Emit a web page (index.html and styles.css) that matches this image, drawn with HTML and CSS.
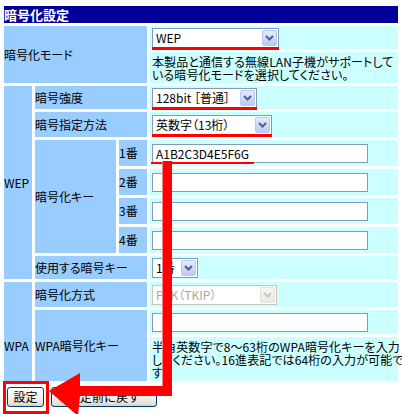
FILE: index.html
```html
<!DOCTYPE html>
<html lang="ja">
<head>
<meta charset="utf-8">
<title>暗号化設定</title>
<link rel="stylesheet" href="styles.css">
</head>
<body>
<div class="page">
  <table class="cfg">
    <colgroup><col class="c1"><col class="c2"><col class="c3"><col class="c4"></colgroup>
    <tr class="h17"><th class="title" colspan="4">暗号化設定</th></tr>
    <tr class="h23">
      <td class="lbl" colspan="3" rowspan="2">暗号化モード</td>
      <td class="val"><div class="sel w127 mark"><span class="sel-text">WEP</span><span class="sel-btn"><svg width="9" height="6" viewBox="0 0 9 6"><path d="M1 1l3.5 3.5L8 1" fill="none" stroke="#4d6185" stroke-width="2"/></svg></span></div></td>
    </tr>
    <tr class="h31"><td class="val desc">本製品と通信する無線LAN子機がサポートして<br>いる暗号化モードを選択してください。</td></tr>
    <tr class="h23">
      <td class="lbl" rowspan="7">WEP</td>
      <td class="lbl" colspan="2">暗号強度</td>
      <td class="val"><div class="sel w105 mark"><span class="sel-text">128bit ［普通］</span><span class="sel-btn"><svg width="9" height="6" viewBox="0 0 9 6"><path d="M1 1l3.5 3.5L8 1" fill="none" stroke="#4d6185" stroke-width="2"/></svg></span></div></td>
    </tr>
    <tr class="h25">
      <td class="lbl" colspan="2">暗号指定方法</td>
      <td class="val"><div class="sel w120 mark"><span class="sel-text">英数字（13桁）</span><span class="sel-btn"><svg width="9" height="6" viewBox="0 0 9 6"><path d="M1 1l3.5 3.5L8 1" fill="none" stroke="#4d6185" stroke-width="2"/></svg></span></div></td>
    </tr>
    <tr class="h26">
      <td class="lbl" rowspan="4">暗号化キー</td>
      <td class="lbl">1番</td>
      <td class="val"><div class="keymark"><input class="txt" type="text" value="A1B2C3D4E5F6G"></div></td>
    </tr>
    <tr class="h26"><td class="lbl">2番</td><td class="val"><input class="txt" type="text" value=""></td></tr>
    <tr class="h26"><td class="lbl">3番</td><td class="val"><input class="txt" type="text" value=""></td></tr>
    <tr class="h26"><td class="lbl">4番</td><td class="val"><input class="txt" type="text" value=""></td></tr>
    <tr class="h23">
      <td class="lbl" colspan="2">使用する暗号キー</td>
      <td class="val"><div class="sel w46"><span class="sel-text">1番</span><span class="sel-btn"><svg width="9" height="6" viewBox="0 0 9 6"><path d="M1 1l3.5 3.5L8 1" fill="none" stroke="#4d6185" stroke-width="2"/></svg></span></div></td>
    </tr>
    <tr class="h25">
      <td class="lbl wpa" rowspan="3">WPA</td>
      <td class="lbl" colspan="2">暗号化方式</td>
      <td class="val"><div class="sel w125 dis"><span class="sel-text">PSK（TKIP）</span><span class="sel-btn"><svg width="9" height="6" viewBox="0 0 9 6"><path d="M1 1l3.5 3.5L8 1" fill="none" stroke="#c9c7ba" stroke-width="2"/></svg></span></div></td>
    </tr>
    <tr class="h24">
      <td class="lbl" colspan="2" rowspan="2">WPA暗号化キー</td>
      <td class="val"><input class="txt" type="text" value=""></td>
    </tr>
    <tr class="h44"><td class="val desc">半角英数字で8〜63桁のWPA暗号化キーを入力<br>してください。16進表記では64桁の入力が可能で<br>す</td></tr>
  </table>
  <div class="actions">
    <button class="btn btn-set" type="button">設定</button>
    <button class="btn btn-back" type="button">設定前に戻す</button>
  </div>
  <div class="callout"></div>
  <svg class="arrow" width="402" height="414" viewBox="0 0 402 414">
    <path d="M163 161H172V396H80L78 416L49 391L80 373V386H163Z" fill="#ff0000"/>
    <rect x="162" y="161" width="1" height="225" fill="#ff8080"/>
  </svg>
</div>
</body>
</html>
```

FILE: styles.css
```css
body {
  margin: 0;
  background: #ffffff;
  color: #000000;
  font-family: "Noto Sans CJK JP", "Liberation Sans", sans-serif;
  font-size: 12px;
  font-feature-settings: "palt";
}

.page {
  position: relative;
  width: 402px;
  height: 414px;
  overflow: hidden;
}

.cfg {
  border-collapse: separate;
  border-spacing: 3px;
  table-layout: fixed;
  width: 400px;
  margin: 3px 0 0 1px;
}

col.c1 { width: 28px; }
col.c2 { width: 81px; }
col.c3 { width: 28px; }
col.c4 { width: 248px; }

.cfg th,
.cfg td {
  padding: 0;
  vertical-align: middle;
  text-align: left;
}

.h17 > * { height: 17px; }
.h23 > * { height: 23px; }
.h24 > * { height: 24px; }
.h25 > * { height: 25px; }
.h26 > * { height: 26px; }
.h31 > * { height: 31px; }
.h44 > * { height: 44px; }

.title {
  background: #000099;
  color: #ffffff;
  font-size: 13px;
  font-weight: bold;
  line-height: 17px;
  padding-left: 2px;
}

.lbl {
  background: #99ccff;
  padding-left: 2px;
  white-space: nowrap;
  line-height: 14px;
}

.cfg td.wpa {
  padding-top: 29px;
}

.val {
  background: #ccffff;
}

.cfg td.val {
  padding-left: 2px;
}

.desc {
  line-height: 13px;
  white-space: nowrap;
  letter-spacing: 0.1px;
}

/* select look-alike */
.sel {
  position: relative;
  display: flex;
  align-items: center;
  box-sizing: border-box;
  height: 20px;
  border: 1px solid #7f9db9;
  background: #ffffff;
}

.w46 { width: 46px; }
.w105 { width: 105px; }
.w120 { width: 120px; }
.w125 { width: 125px; }
.w127 { width: 127px; }

.sel-text {
  flex: 1;
  padding-left: 3px;
  white-space: nowrap;
  overflow: hidden;
  line-height: 18px;
}

.sel-btn {
  display: flex;
  align-items: center;
  justify-content: center;
  box-sizing: border-box;
  width: 15px;
  height: 16px;
  margin-right: 1px;
  border: 1px solid #b9c9ef;
  border-radius: 2px;
  background: linear-gradient(#e3ebff, #b8cbf7);
}

.sel.dis {
  border-color: #c9c7ba;
}

.sel.dis .sel-text {
  color: #aca899;
}

.sel.dis .sel-btn {
  border-color: #e6e4da;
  background: linear-gradient(#f6f5f0, #ebe9e0);
}

.mark::after {
  content: "";
  position: absolute;
  left: -1px;
  right: -1px;
  bottom: -3px;
  height: 3px;
  background: #ff0000;
}

/* text inputs */
.txt {
  display: block;
  box-sizing: border-box;
  width: 216px;
  height: 19px;
  margin: 0;
  padding: 0 0 0 3px;
  border: 1px solid #7f9db9;
  background: #ffffff;
  font-family: "Noto Sans CJK JP", "Liberation Sans", sans-serif;
  font-size: 12px;
  color: #000000;
  outline: none;
}

.keymark {
  position: relative;
}

.keymark::after {
  content: "";
  position: absolute;
  left: -1px;
  top: 18px;
  width: 103px;
  height: 2px;
  background: #ff0000;
}

/* buttons */
.actions {
  display: flex;
  gap: 7px;
  margin: 3px 0 0 7px;
}

.btn {
  box-sizing: border-box;
  height: 20px;
  padding: 0;
  border: 1px solid #003c74;
  border-radius: 3px;
  background: linear-gradient(#ffffff 0%, #f5f4ef 45%, #e6e3d9 85%, #d6d0c5 100%);
  font-family: "Noto Sans CJK JP", "Liberation Sans", sans-serif;
  font-size: 12px;
  line-height: 18px;
  color: #000000;
}

.btn-set { width: 37px; }
.btn-back { width: 106px; }

/* annotations */
.callout {
  position: absolute;
  left: 3px;
  top: 381px;
  width: 46px;
  height: 33px;
  box-sizing: border-box;
  border: 3px solid #ff0000;
}

.arrow {
  position: absolute;
  left: 0;
  top: 0;
  pointer-events: none;
}
```
